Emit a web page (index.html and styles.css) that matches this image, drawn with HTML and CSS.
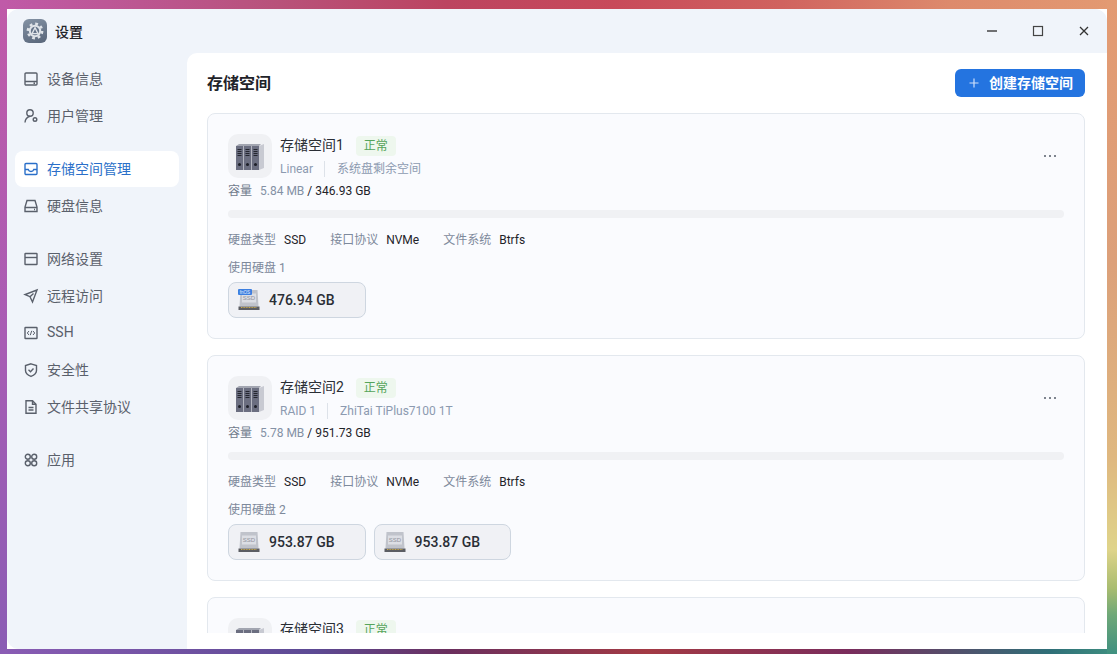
FILE: index.html
```html
<!DOCTYPE html>
<html lang="zh-CN">

<head>
  <meta charset="UTF-8">
  <meta name="viewport" content="width=device-width, initial-scale=1.0">
  <title>设置</title>
  <link rel="stylesheet" href="styles.css">
</head>

<body>
  <div class="window">
    <div class="titlebar">
      <div class="app-logo">
        <svg width="24" height="24" viewBox="0 0 24 24">
          <circle cx="12" cy="12" r="7.2" fill="none" stroke="#dfe3e8" stroke-width="2.4" stroke-dasharray="2.8 2.85"/>
          <circle cx="12" cy="12" r="6.2" fill="#dfe3e8"/>
          <circle cx="12" cy="12" r="4.2" fill="#66758a"/>
          <path d="M12 8.6 15 14.6H9Z" fill="none" stroke="#dfe3e8" stroke-width="1.3"/>
        </svg>
      </div>
      <span class="app-name">设置</span>
      <div class="win-controls">
        <div class="win-btn">
          <svg width="12" height="12" viewBox="0 0 12 12"><path d="M1 6h10" stroke="#444" stroke-width="1.5"/></svg>
        </div>
        <div class="win-btn">
          <svg width="12" height="12" viewBox="0 0 12 12"><rect x="1.500" y="1.500" width="9" height="9" fill="none" stroke="#444" stroke-width="1.200"/></svg>
        </div>
        <div class="win-btn">
          <svg width="12" height="12" viewBox="0 0 12 12"><path d="M2 2l8 8M10 2l-8 8" stroke="#333" stroke-width="1.300"/></svg>
        </div>
      </div>
    </div>

    <div class="layout">
      <div class="sidebar">
        <div class="nav-group">
          <a class="nav-item">
            <svg class="nav-icon" viewBox="0 0 16 16"><rect x="2" y="2" width="12" height="12" rx="1"/><path d="M2 10.500h12M10.500 12.300h1.500"/></svg>
            设备信息
          </a>
          <a class="nav-item">
            <svg class="nav-icon" viewBox="0 0 16 16"><circle cx="7" cy="5" r="3.200"/><path d="M2 14.500c.2-3 2-5.500 5-6.300"/><circle cx="12" cy="11.500" r="1.800"/></svg>
            用户管理
          </a>
        </div>
        <div class="nav-group">
          <a class="nav-item active">
            <svg class="nav-icon" viewBox="0 0 16 16"><rect x="2" y="2.500" width="12" height="11" rx="1"/><path d="M2 8.500h3.200c.5 1.400 1.500 2 2.800 2s2.300-.6 2.800-2H14"/></svg>
            存储空间管理
          </a>
          <a class="nav-item">
            <svg class="nav-icon" viewBox="0 0 16 16"><path d="M4 2.500h8l2 6.500v4.500H2V9Z"/><path d="M2 9.500h12M11 11.500h1"/></svg>
            硬盘信息
          </a>
        </div>
        <div class="nav-group">
          <a class="nav-item">
            <svg class="nav-icon" viewBox="0 0 16 16"><rect x="2" y="2.500" width="12" height="11" rx="0.500"/><path d="M2 6.500h12"/></svg>
            网络设置
          </a>
          <a class="nav-item">
            <svg class="nav-icon" viewBox="0 0 16 16"><path d="M14 2 2 6.500l5 2.200 2.500 5.300ZM7 8.700 10.500 5.500"/></svg>
            远程访问
          </a>
          <a class="nav-item">
            <svg class="nav-icon" viewBox="0 0 16 16"><rect x="2" y="2.500" width="12" height="11" rx="0.500"/><path d="M6 6 4.300 8 6 10M10 6l1.700 2L10 10M8.700 5.800l-1.400 4.400" stroke-width="1"/></svg>
            SSH
          </a>
          <a class="nav-item">
            <svg class="nav-icon" viewBox="0 0 16 16"><path d="M8 1.800 13.500 3.500v5c0 2.800-2.500 4.700-5.500 5.900-3-1.200-5.500-3.100-5.500-5.900v-5Z"/><path d="M5.500 7.800 7.500 9.800l3-3.200"/></svg>
            安全性
          </a>
          <a class="nav-item">
            <svg class="nav-icon" viewBox="0 0 16 16"><path d="M3 1.800h6.500l3.500 3.500v9H3Z"/><path d="M9.500 1.800v3.500H13M5.500 8.500h5M5.500 11h5"/></svg>
            文件共享协议
          </a>
        </div>
        <div class="nav-group">
          <a class="nav-item">
            <svg class="nav-icon" viewBox="0 0 16 16"><circle cx="4.800" cy="4.800" r="2.500"/><circle cx="11.200" cy="4.800" r="2.500"/><circle cx="4.800" cy="11.200" r="2.500"/><circle cx="11.200" cy="11.200" r="2.500"/></svg>
            应用
          </a>
        </div>
      </div>

      <div class="main">
        <div class="main-header">
          <h2>存储空间</h2>
          <button class="create-btn">
            <svg class="plus" width="10" height="10" viewBox="0 0 10 10"><path d="M5 .5v9M.5 5h9" stroke="#cfe0fa" stroke-width="1.200"/></svg>
            创建存储空间
          </button>
        </div>

        <div class="pool-list">
          <div class="pool-card">
            <div class="pool-head">
              <div class="pool-icon">
                <svg width="44" height="44" viewBox="0 0 44 44"><use href="#binders"/></svg>
              </div>
              <div class="pool-info">
                <div class="pool-title">存储空间1<span class="badge">正常</span></div>
                <div class="pool-sub"><span>Linear</span><span>系统盘剩余空间</span></div>
              </div>
              <div class="more-btn"><i></i><i></i><i></i></div>
            </div>
            <p class="capacity">容量<span class="cap-used">5.84 MB</span><b>/ 346.93 GB</b></p>
            <div class="bar"></div>
            <div class="specs">
              <span>硬盘类型<b>SSD</b></span>
              <span>接口协议<b>NVMe</b></span>
              <span>文件系统<b>Btrfs</b></span>
            </div>
            <p class="disk-label">使用硬盘 1</p>
            <div class="disks">
              <div class="disk">
                <svg width="22" height="22" viewBox="0 0 22 22">
                  <use href="#ssd"/>
                  <rect x="0" y="0" width="14" height="6" rx="1" fill="#3d7fe0"/>
                  <text x="7" y="4.600" text-anchor="middle" class="os-text">fnOS</text>
                </svg>
                476.94 GB
              </div>
            </div>
          </div>

          <div class="pool-card">
            <div class="pool-head">
              <div class="pool-icon">
                <svg width="44" height="44" viewBox="0 0 44 44"><use href="#binders"/></svg>
              </div>
              <div class="pool-info">
                <div class="pool-title">存储空间2<span class="badge">正常</span></div>
                <div class="pool-sub"><span>RAID 1</span><span>ZhiTai TiPlus7100 1T</span></div>
              </div>
              <div class="more-btn"><i></i><i></i><i></i></div>
            </div>
            <p class="capacity">容量<span class="cap-used">5.78 MB</span><b>/ 951.73 GB</b></p>
            <div class="bar"></div>
            <div class="specs">
              <span>硬盘类型<b>SSD</b></span>
              <span>接口协议<b>NVMe</b></span>
              <span>文件系统<b>Btrfs</b></span>
            </div>
            <p class="disk-label">使用硬盘 2</p>
            <div class="disks">
              <div class="disk"><svg width="22" height="22" viewBox="0 0 22 22"><use href="#ssd"/></svg>953.87 GB</div>
              <div class="disk"><svg width="22" height="22" viewBox="0 0 22 22"><use href="#ssd"/></svg>953.87 GB</div>
            </div>
          </div>

          <div class="pool-card">
            <div class="pool-head">
              <div class="pool-icon">
                <svg width="44" height="44" viewBox="0 0 44 44"><use href="#binders"/></svg>
              </div>
              <div class="pool-info">
                <div class="pool-title">存储空间3<span class="badge">正常</span></div>
              </div>
            </div>
          </div>
        </div>
      </div>
    </div>
  </div>

  <!-- shared drawings -->
  <svg class="defs" width="0" height="0">
    <defs>
      <g id="binders">
        <path d="M31 12l5-2v24l-5 2Z" fill="#c8cad2"/>
        <path d="M8 12l3-2h22l-2 2Z" fill="#a2a5b0"/>
        <rect x="8" y="12" width="7" height="24" fill="#6b6e80"/>
        <rect x="15" y="12" width="1" height="24" fill="#b4b6c0"/>
        <rect x="16" y="12" width="7" height="24" fill="#6b6e80"/>
        <rect x="23" y="12" width="1" height="24" fill="#b4b6c0"/>
        <rect x="24" y="12" width="7" height="24" fill="#6b6e80"/>
        <path d="M9.500 15.500h4M9.500 17.500h4M9.500 19.500h4M9.500 21.500h4M17.500 15.500h4M17.500 17.500h4M17.500 19.500h4M17.500 21.500h4M25.500 15.500h4M25.500 17.500h4M25.500 19.500h4M25.500 21.500h4" stroke="#24262f" stroke-width="1"/>
        <circle cx="11.500" cy="30.500" r="1.500" fill="#1d1f28"/>
        <circle cx="19.500" cy="30.500" r="1.500" fill="#1d1f28"/>
        <circle cx="27.500" cy="30.500" r="1.500" fill="#1d1f28"/>
      </g>
      <g id="ssd">
        <path d="M2.500 1h17l1 16.500H1.500Z" fill="#c0c3cb"/>
        <rect x="4" y="4.500" width="14" height="9" fill="#dcdee4"/>
        <text x="11" y="11.300" text-anchor="middle" class="ssd-text">SSD</text>
        <rect x="0.500" y="17.500" width="21" height="3.500" fill="#5b5d63"/>
        <path d="M3 18.500h16" stroke="#c9a94e" stroke-width="1" stroke-dasharray="1 .6"/>
      </g>
    </defs>
  </svg>
</body>

</html>
```

FILE: styles.css
```css
* {
  margin: 0;
  padding: 0;
  box-sizing: border-box;
  font-family: 'Roboto', 'Noto Sans CJK SC', sans-serif;
}

html,
body {
  height: 100%;
}

body {
  overflow: hidden;
  padding: 9px 10px 5px 7px;
  background:
    linear-gradient(180deg, #c05aa8 0%, #a95cb4 50%, #8a5cb4 100%) left / 7px 100% no-repeat,
    linear-gradient(180deg, #e39a72 0%, #dca07a 40%, #dfb880 70%, #dfd48a 84%, #a8bc70 90%, #6fa878 94%, #3f9080 100%) right / 10px 100% no-repeat,
    linear-gradient(90deg, #c05aa8 0%, #b8527a 25%, #bc4460 40%, #c84a5a 55%, #d0635f 70%, #dd8a6c 85%, #e39a72 100%) top / 100% 9px no-repeat,
    linear-gradient(90deg, #8a5cb4 0%, #5c4a94 28%, #6a2f5e 40%, #a33a44 58%, #7a2c5c 76%, #2f6f78 94%, #3f9080 100%) bottom / 100% 5px no-repeat;
}

.window {
  height: 100%;
  display: flex;
  flex-direction: column;
  background-color: #f0f4fa;
  border-radius: 12px;
  overflow: hidden;
}

/* Title bar */
.titlebar {
  height: 44px;
  flex-shrink: 0;
  display: flex;
  align-items: center;
  padding-left: 16px;
}

.app-logo {
  width: 24px;
  height: 24px;
  border-radius: 6px;
  background: linear-gradient(160deg, #8593a5, #586579);
}

.app-logo svg {
  display: block;
}

.app-name {
  margin-left: 8px;
  font-size: 14px;
  font-weight: 500;
  color: #1f2329;
}

.win-controls {
  margin-left: auto;
  display: flex;
}

.win-btn {
  width: 46px;
  height: 44px;
  display: flex;
  align-items: center;
  justify-content: center;
}

/* Sidebar */
.layout {
  flex: 1;
  min-height: 0;
  display: flex;
}

.sidebar {
  width: 180px;
  flex-shrink: 0;
  padding: 8px;
  display: flex;
  flex-direction: column;
  gap: 17px;
}

.nav-group {
  display: flex;
  flex-direction: column;
  gap: 1px;
}

.nav-item {
  height: 36px;
  display: flex;
  align-items: center;
  gap: 8px;
  padding-left: 8px;
  padding-bottom: 2px;
  border-radius: 8px;
  font-size: 14px;
  color: #5a606b;
}

.nav-item.active {
  background-color: #ffffff;
  color: #2a6fc9;
}

.nav-icon {
  width: 16px;
  height: 16px;
  margin-top: 2px;
  flex-shrink: 0;
  fill: none;
  stroke: currentColor;
  stroke-width: 1.400;
}

/* Main panel */
.main {
  flex: 1;
  min-width: 0;
  display: flex;
  flex-direction: column;
  padding: 0 22px 16px 20px;
  background-color: #ffffff;
  border-top-left-radius: 10px;
}

.main-header {
  height: 60px;
  flex-shrink: 0;
  display: flex;
  align-items: center;
  justify-content: space-between;
}

.main-header h2 {
  margin-bottom: 2px;
  font-size: 16px;
  font-weight: 600;
  color: #1f2329;
}

.create-btn {
  height: 28px;
  width: 130px;
  display: flex;
  align-items: center;
  gap: 10px;
  padding-left: 14px;
  padding-bottom: 2px;
  border: none;
  border-radius: 6px;
  background-color: #2474e0;
  color: #fff;
  font-size: 14px;
  font-weight: 600;
}

.plus {
  margin-top: 2px;
}

.pool-list {
  flex: 1;
  min-height: 0;
  overflow: hidden;
  display: flex;
  flex-direction: column;
  gap: 16px;
}

.pool-card {
  flex-shrink: 0;
  height: 226px;
  padding: 20px;
  border: 1px solid #e3e8ee;
  border-radius: 8px;
  background-color: #fafbfe;
}

.pool-head {
  display: flex;
  align-items: center;
  height: 44px;
}

.pool-icon {
  width: 44px;
  height: 44px;
  border-radius: 10px;
  background-color: #f0f1f4;
}

.pool-icon svg {
  display: block;
}

.pool-info {
  margin-left: 8px;
  padding-top: 2px;
  align-self: flex-start;
}

.pool-title {
  height: 20px;
  display: flex;
  align-items: flex-start;
  font-size: 14px;
  line-height: 18px;
  color: #2a2e35;
}

.badge {
  width: 40px;
  height: 20px;
  margin-left: 12px;
  border-radius: 4px;
  background-color: #eef7ee;
  color: #55a45a;
  font-size: 12px;
  line-height: 20px;
  text-align: center;
}

.pool-sub {
  margin-top: 5px;
  display: flex;
  font-size: 12px;
  line-height: 16px;
  color: #8c9ab0;
}

.pool-sub span + span {
  margin-left: 11px;
  padding-left: 12px;
  border-left: 1px solid #dde2e9;
}

.more-btn {
  margin-left: auto;
  width: 28px;
  display: flex;
  justify-content: center;
  gap: 2.500px;
}

.more-btn i {
  width: 2.500px;
  height: 2.500px;
  border-radius: 50%;
  background-color: #555c68;
}

.capacity {
  margin-top: 5px;
  font-size: 12px;
  line-height: 16px;
  color: #6f7a8c;
}

.cap-used {
  margin-left: 8px;
  color: #8491a5;
}

.capacity b {
  margin-left: 3px;
  font-weight: 400;
  color: #1f2329;
}

.bar {
  margin-top: 11px;
  height: 8px;
  border-radius: 4px;
  background-color: #f0f1f4;
}

.specs {
  margin-top: 14px;
  display: flex;
  gap: 24px;
  font-size: 12px;
  line-height: 16px;
  color: #7d899b;
}

.specs b {
  margin-left: 8px;
  font-weight: 400;
  color: #1f2329;
}

.disk-label {
  margin-top: 12px;
  font-size: 12px;
  line-height: 16px;
  color: #7d899b;
}

.disks {
  margin-top: 6px;
  display: flex;
  gap: 8px;
}

.disk {
  height: 36px;
  display: flex;
  align-items: center;
  gap: 9px;
  padding: 0 30px 0 9px;
  border: 1px solid #ced6e0;
  border-radius: 8px;
  background-color: #f0f1f5;
  font-size: 14px;
  font-weight: 500;
  color: #2a2e35;
}

.defs {
  position: absolute;
}

.ssd-text {
  font-size: 6px;
  font-family: 'Liberation Sans', sans-serif;
  fill: #8f929c;
}

.os-text {
  font-size: 4.500px;
  font-family: 'Liberation Sans', sans-serif;
  fill: #e4eefc;
}
```
